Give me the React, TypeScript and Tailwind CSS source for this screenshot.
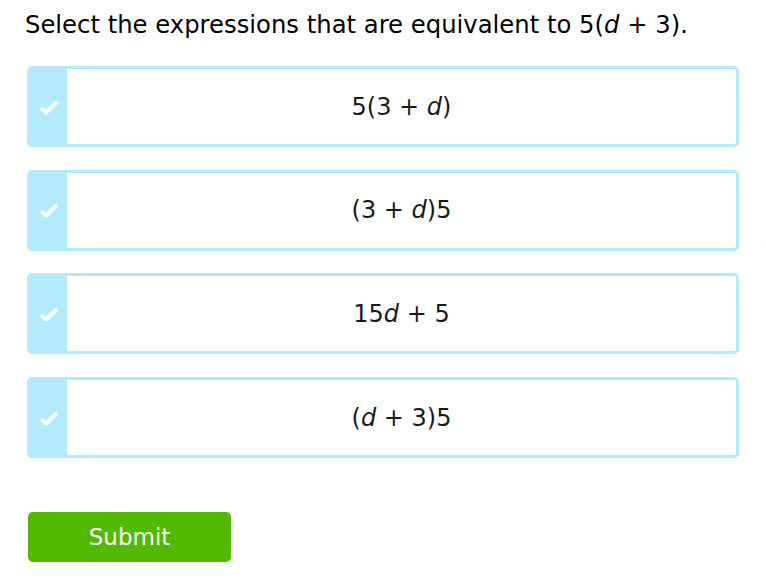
import React from 'react';

const options: React.ReactNode[] = [
  <>5(3 + <i>d</i>)</>,
  <>(3 + <i>d</i>)5</>,
  <>15<i>d</i> + 5</>,
  <>(<i>d</i> + 3)5</>,
];

function Check() {
  return (
    <svg width="20" height="16" viewBox="0 0 20 16" fill="none">
      <path d="M2 9 L7 13.5 L18 3" stroke="#ffffff" strokeWidth="4" strokeLinejoin="miter" />
    </svg>
  );
}

export default function App() {
  return (
    <div className="w-[766px] h-[582px] bg-white text-[#000] font-['DejaVu_Sans',Verdana,sans-serif]">
      <div className="pl-[25px] pt-[9px] pr-[27px]">
        <h1 className="text-[24.3px] leading-[32px] font-normal">
          Select the expressions that are equivalent to 5(<i>d</i> + 3).
        </h1>
        <div className="mt-[25px] flex flex-col gap-[22.7px] pl-[2px]">
          {options.map((o, i) => (
            <button
              key={i}
              className="flex h-[81px] w-[712px] rounded-[5px] border-[3px] border-[#b3ebfd] bg-white text-left"
            >
              <div className="flex w-[37px] items-center justify-center bg-[#b3ebfd] pl-[1px]">
                <Check />
              </div>
              <div className="flex flex-1 items-center justify-center text-[24px] text-[#1a1a1a]">
                <span className="whitespace-pre">{o}</span>
              </div>
            </button>
          ))}
        </div>
        <button className="mt-[54px] ml-[3px] h-[50px] w-[203px] rounded-[5px] bg-[#52b800] text-[23px] text-white">
          Submit
        </button>
      </div>
    </div>
  );
}
